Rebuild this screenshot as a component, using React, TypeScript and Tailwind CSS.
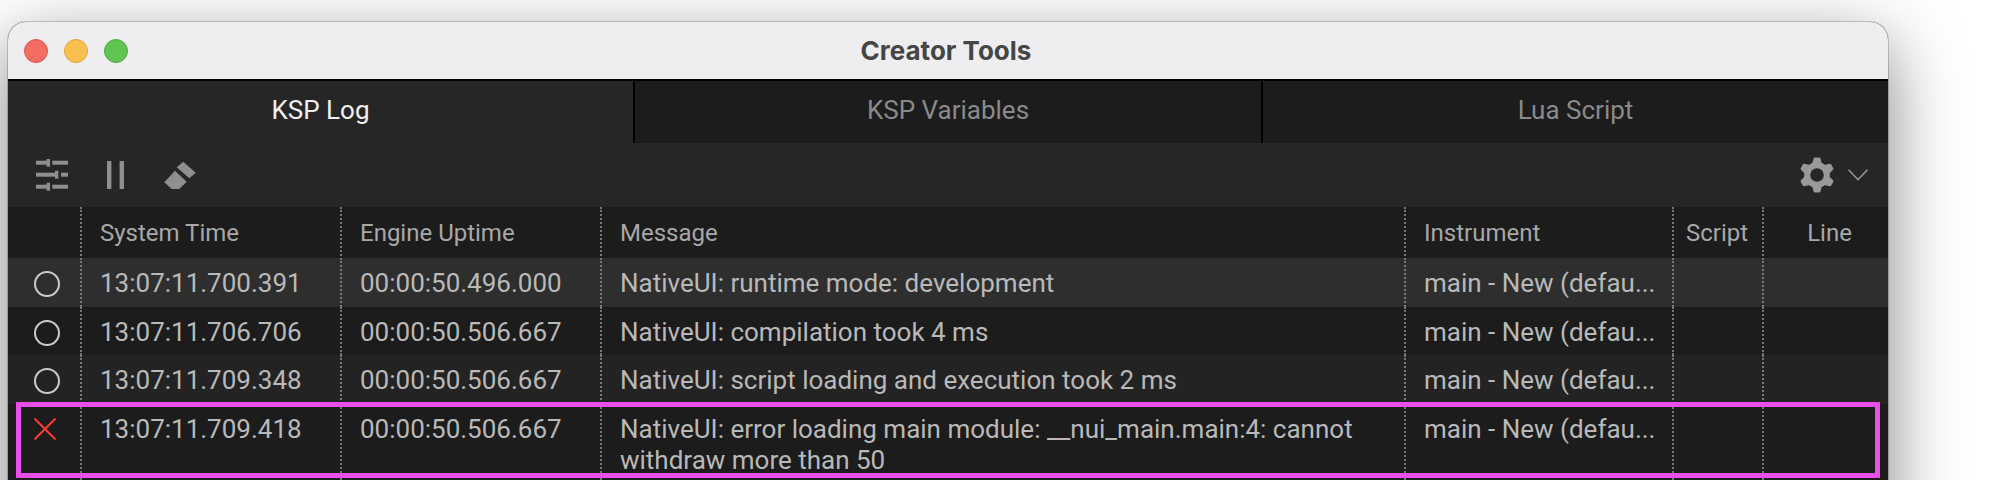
import React from "react";

const cols = "grid grid-cols-[72px_260px_260px_804px_268px_90px_126px]";
const sep = "border-l-2 border-dotted border-[#777777]";

function Gear() {
  const cx = 17, cy = 18, R = 16.2, r = 11.6;
  const pts: string[] = [];
  for (let i = 0; i < 6; i++) {
    const a = -90 + i * 60;
    for (const [d, rad] of [[-17, r], [-7, R], [7, R], [17, r]] as [number, number][]) {
      const t = ((a + d) * Math.PI) / 180;
      pts.push(`${(cx + rad * Math.cos(t)).toFixed(2)},${(cy + rad * Math.sin(t)).toFixed(2)}`);
    }
  }
  return (
    <svg width="34" height="36" viewBox="0 0 34 36">
      <polygon points={pts.join(" ")} fill="#999999" stroke="#999999" strokeWidth="3" strokeLinejoin="round" />
      <circle cx={cx} cy={cy} r="6.8" fill="#262626" />
    </svg>
  );
}

function Sliders() {
  return (
    <svg width="32" height="34" viewBox="0 0 32 34" fill="#8f8f8f">
      <rect x="0" y="2.7" width="11" height="4" />
      <rect x="10.7" y="1" width="3.3" height="7.7" />
      <rect x="16.3" y="2.7" width="15.7" height="4" />
      <rect x="0" y="14.7" width="19" height="4" />
      <rect x="19" y="12.7" width="3.3" height="8" />
      <rect x="25" y="14.7" width="7" height="4" />
      <rect x="0" y="26.7" width="11" height="4" />
      <rect x="10.7" y="24.7" width="3.3" height="8" />
      <rect x="16.3" y="26.7" width="15.7" height="4" />
    </svg>
  );
}

function Pause() {
  return (
    <svg width="18" height="28" viewBox="0 0 18 28" fill="#8f8f8f">
      <rect x="0" y="0" width="4.4" height="28" />
      <rect x="12.6" y="0" width="4.4" height="28" />
    </svg>
  );
}

function Eraser() {
  return (
    <svg width="32" height="30" viewBox="0 0 32 30" fill="#8f8f8f">
      <polygon points="19.3,1.7 31.7,12.7 25.3,18.3 12.7,7.3" />
      <polygon points="0.3,22.3 11,10.7 22.7,21.7 15.3,29 7.7,29" />
    </svg>
  );
}

function Circle() {
  return (
    <svg width="26" height="26" viewBox="0 0 26 26" fill="none" stroke="#cccccc" strokeWidth="2">
      <circle cx="13" cy="13" r="12" />
    </svg>
  );
}

function Cross() {
  return (
    <svg className="mt-[1px]" width="22" height="22" viewBox="0 0 22 22" fill="none" stroke="#ff3b30" strokeWidth="2">
      <path d="M0.5 0.5L21.5 21.5M21.5 0.5L0.5 21.5" />
    </svg>
  );
}

const rows = [
  { t: "13:07:11.700.391", u: "00:00:50.496.000", m: "NativeUI: runtime mode: development", bg: "bg-[#2e2e2e]" },
  { t: "13:07:11.706.706", u: "00:00:50.506.667", m: "NativeUI: compilation took 4 ms", bg: "bg-[#1c1c1c]" },
  { t: "13:07:11.709.348", u: "00:00:50.506.667", m: "NativeUI: script loading and execution took 2 ms", bg: "bg-[#232323]" },
];

function Row({ t, u, m, bg, icon, h }: { t: string; u: string; m: string; bg: string; icon: React.ReactNode; h: string }) {
  return (
    <div className={`${cols} ${bg} ${h} text-[26px] leading-[31px] text-[#b9b9b9]`}>
      <div className="pl-[26px] pt-[13px]">{icon}</div>
      <div className={`${sep} pl-[18px] pt-[10px]`}>{t}</div>
      <div className={`${sep} pl-[18px] pt-[10px]`}>{u}</div>
      <div className={`${sep} pl-[18px] pr-[20px] pt-[10px]`}>{m}</div>
      <div className={`${sep} pl-[18px] pt-[10px]`}>main - New (defau...</div>
      <div className={sep} />
      <div className={sep} />
    </div>
  );
}

export default function App() {
  return (
    <div className="h-[480px] overflow-hidden bg-white pl-2 pt-[22px] font-['Roboto',sans-serif]">
      <div className="h-[520px] w-[1880px] overflow-hidden rounded-t-[18px] bg-[#262626] shadow-[0_0_0_1px_rgba(0,0,0,0.18),0_22px_70px_rgba(0,0,0,0.5)]">
        <div className="relative flex h-[57px] items-center justify-center bg-[#eeeef0]">
          <div className="absolute left-4 top-[17px] flex gap-4">
            <div className="h-6 w-6 rounded-full border border-[#e0534c] bg-[#f26d62]" />
            <div className="h-6 w-6 rounded-full border border-[#dfa23f] bg-[#f7c04f]" />
            <div className="h-6 w-6 rounded-full border border-[#4eaa44] bg-[#61c554]" />
          </div>
          <span className="pr-[4px] font-['Inter',sans-serif] text-[26px] font-bold text-[#454545]">Creator Tools</span>
        </div>
        <div className="h-[2px] bg-black" />
        <div className="grid h-[62px] grid-cols-[625px_628px_1fr] text-[26px]">
          <div className="flex items-center justify-center bg-[#262626] pb-[3px] text-[#f0f0f0]">KSP Log</div>
          <div className="flex items-center justify-center border-l-2 border-black bg-[#1c1c1c] pb-[3px] text-[#8a8a8a]">KSP Variables</div>
          <div className="flex items-center justify-center border-l-2 border-black bg-[#1c1c1c] pb-[3px] text-[#8a8a8a]">Lua Script</div>
        </div>
        <div className="flex h-[64px] items-center bg-[#262626] pl-7 pr-5">
          <Sliders />
          <div className="ml-[39px]"><Pause /></div>
          <div className="ml-[39px]"><Eraser /></div>
          <div className="ml-auto"><Gear /></div>
          <svg className="ml-[14px]" width="20" height="12" viewBox="0 0 20 12" fill="none" stroke="#999999" strokeWidth="1.6">
            <path d="M0.5 0.7L10 10.7L19.5 0.7" />
          </svg>
        </div>
        <div className={`${cols} h-[51px] bg-[#1c1c1c] text-[24px] leading-[53px] text-[#a8a8a8]`}>
          <div />
          <div className={`${sep} pl-[18px]`}>System Time</div>
          <div className={`${sep} pl-[18px]`}>Engine Uptime</div>
          <div className={`${sep} pl-[18px]`}>Message</div>
          <div className={`${sep} pl-[18px]`}>Instrument</div>
          <div className={`${sep} pr-[2px] text-center`}>Script</div>
          <div className={`${sep} pl-[7px] text-center`}>Line</div>
        </div>
        {rows.map((r) => (
          <Row key={r.t} {...r} icon={<Circle />} h="h-[48.5px]" />
        ))}
        <div className="relative">
          <Row
            t="13:07:11.709.418"
            u="00:00:50.506.667"
            m="NativeUI: error loading main module: __nui_main.main:4: cannot withdraw more than 50"
            bg="bg-[#1c1c1c]"
            icon={<Cross />}
            h="h-[76px]"
          />
          <div className="absolute left-2 right-2 top-[-1.5px] h-[76px] border-[5px] border-[#ea4fea]" />
        </div>
      </div>
    </div>
  );
}
